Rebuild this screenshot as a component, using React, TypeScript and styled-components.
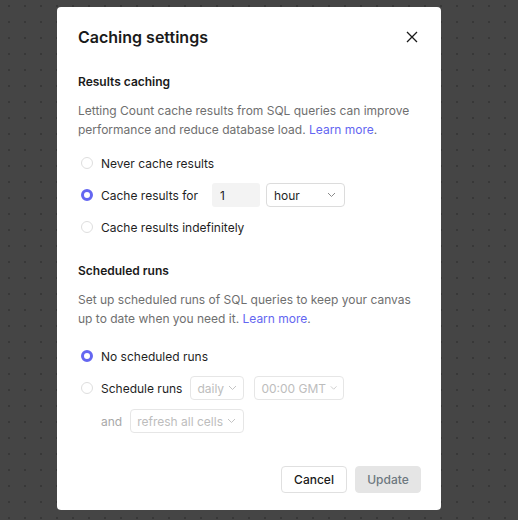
import React from "react";
import styled, { createGlobalStyle } from "styled-components";

const Global = createGlobalStyle`
  html, body { margin: 0; padding: 0; }
  body {
    width: 518px;
    height: 520px;
    overflow: hidden;
    background-color: #454545;
    background-image: radial-gradient(circle, #383838 0.9px, transparent 1.1px);
    background-size: 16px 16px;
    background-position: 1px -2px;
    font-family: Inter, "Noto Sans", sans-serif;
    -webkit-font-smoothing: antialiased;
  }
`;

const Page = styled.div`
  display: flex;
  justify-content: flex-start;
  padding: 7px 0 0 57px;
`;

const Modal = styled.div`
  width: 384px;
  height: 503px;
  box-sizing: border-box;
  background: #fff;
  border-radius: 4px;
  padding: 18px 20px 17px 21px;
  display: flex;
  flex-direction: column;
  color: #1b1b1b;
`;

const Header = styled.div`
  height: 24px;
  display: flex;
  align-items: center;
  justify-content: space-between;
`;

const Title = styled.h1`
  margin: 0;
  font-size: 16px;
  font-weight: 600;
  color: #1a1a1a;
`;

const CloseButton = styled.button`
  width: 24px;
  height: 24px;
  margin-right: -3px;
  padding: 0;
  border: none;
  background: transparent;
  display: flex;
  align-items: center;
  justify-content: center;
  color: #1a1a1a;
`;

const SectionTitle = styled.h2<{ $top: number }>`
  margin: ${(p) => p.$top}px 0 0 0;
  font-size: 12px;
  line-height: 20px;
  font-weight: 600;
  color: #1a1a1a;
`;

const Description = styled.p`
  margin: 9px 0 0 0;
  font-size: 12px;
  line-height: 19px;
  color: #6f6f6f;
`;

const Link = styled.a`
  color: #6366f1;
  text-decoration: none;
`;

const RadioGroup = styled.div<{ $top: number }>`
  margin-top: ${(p) => p.$top}px;
  display: flex;
  flex-direction: column;
  gap: 8px;
`;

const Row = styled.div<{ $indent?: boolean; $extra?: number }>`
  height: 24px;
  display: flex;
  align-items: center;
  padding-left: ${(p) => (p.$indent ? "23px" : "0")};
  margin-top: ${(p) => p.$extra || 0}px;
`;

const Radio = styled.span<{ $checked?: boolean }>`
  width: 12px;
  height: 12px;
  box-sizing: border-box;
  border-radius: 50%;
  margin: 0 8px 0 3px;
  flex: none;
  border: ${(p) => (p.$checked ? "3.5px solid #6466f1" : "1px solid #dedede")};
  background: #fff;
`;

const Label = styled.span<{ $muted?: boolean; $gap?: number }>`
  font-size: 12px;
  white-space: nowrap;
  color: ${(p) => (p.$muted ? "#a8a8a8" : "#1f1f1f")};
  margin-right: ${(p) => p.$gap ?? 0}px;
`;

const NumberBox = styled.div`
  width: 48px;
  height: 24px;
  box-sizing: border-box;
  border-radius: 3px;
  background: #f3f3f3;
  font-size: 12px;
  padding-left: 8px;
  display: flex;
  align-items: center;
  color: #1f1f1f;
  margin-right: 6px;
`;

const Select = styled.div<{ $w: number; $disabled?: boolean }>`
  width: ${(p) => p.$w}px;
  height: 24px;
  box-sizing: border-box;
  border: 1px solid ${(p) => (p.$disabled ? "#e6e6e6" : "#dcdcdc")};
  border-radius: 4px;
  display: flex;
  align-items: center;
  justify-content: ${(p) => (p.$disabled ? "flex-start" : "space-between")};
  gap: 4px;
  padding: 0 ${(p) => (p.$disabled ? 6 : 8)}px 0 ${(p) => (p.$disabled ? 6 : 7)}px;
  font-size: 12px;
  white-space: nowrap;
  color: ${(p) => (p.$disabled ? "#bdbdbd" : "#1f1f1f")};
  margin-right: 10px;
`;

const Footer = styled.div`
  margin-top: auto;
  display: flex;
  justify-content: flex-end;
  gap: 8px;
`;

const Button = styled.button<{ $primary?: boolean }>`
  width: 66px;
  height: 27px;
  box-sizing: border-box;
  border-radius: 4px;
  font-family: inherit;
  font-size: 12px;
  font-weight: 500;
  border: 1px solid ${(p) => (p.$primary ? "#e5e5e5" : "#e0e0e0")};
  background: ${(p) => (p.$primary ? "#e5e5e5" : "#fff")};
  color: ${(p) => (p.$primary ? "#6d7880" : "#1a1a1a")};
`;

const Chevron = ({ color }: { color: string }) => (
  <svg width="9" height="6" viewBox="0 0 9 6" fill="none">
    <path d="M1 1l3.5 3.5L8 1" stroke={color} strokeWidth="1" />
  </svg>
);

export default function App() {
  return (
    <>
      <Global />
      <Page>
        <Modal>
          <Header>
            <Title>Caching settings</Title>
            <CloseButton aria-label="Close">
              <svg width="12" height="12" viewBox="0 0 12 12" fill="none">
                <path d="M1 1l10 10M11 1L1 11" stroke="#1a1a1a" strokeWidth="1.3" />
              </svg>
            </CloseButton>
          </Header>

          <SectionTitle $top={23}>Results caching</SectionTitle>
          <Description>
            Letting Count cache results from SQL queries can improve performance and reduce
            database load. <Link>Learn more</Link>.
          </Description>
          <RadioGroup $top={12}>
            <Row>
              <Radio />
              <Label>Never cache results</Label>
            </Row>
            <Row>
              <Radio $checked />
              <Label $gap={14}>Cache results for</Label>
              <NumberBox>1</NumberBox>
              <Select $w={79}>
                hour
                <Chevron color="#8a8a8a" />
              </Select>
            </Row>
            <Row>
              <Radio />
              <Label>Cache results indefinitely</Label>
            </Row>
          </RadioGroup>

          <SectionTitle $top={22}>Scheduled runs</SectionTitle>
          <Description>
            Set up scheduled runs of SQL queries to keep your canvas up to date when you need
            it. <Link>Learn more</Link>.
          </Description>
          <RadioGroup $top={16}>
            <Row>
              <Radio $checked />
              <Label>No scheduled runs</Label>
            </Row>
            <Row>
              <Radio />
              <Label $gap={8}>Schedule runs</Label>
              <Select $w={54} $disabled>
                daily
                <Chevron color="#c4c4c4" />
              </Select>
              <Select $w={90} $disabled>
                00:00 GMT
                <Chevron color="#c4c4c4" />
              </Select>
            </Row>
            <Row $indent $extra={1}>
              <Label $muted $gap={8}>and</Label>
              <Select $w={114} $disabled>
                refresh all cells
                <Chevron color="#c4c4c4" />
              </Select>
            </Row>
          </RadioGroup>

          <Footer>
            <Button>Cancel</Button>
            <Button $primary>Update</Button>
          </Footer>
        </Modal>
      </Page>
    </>
  );
}
